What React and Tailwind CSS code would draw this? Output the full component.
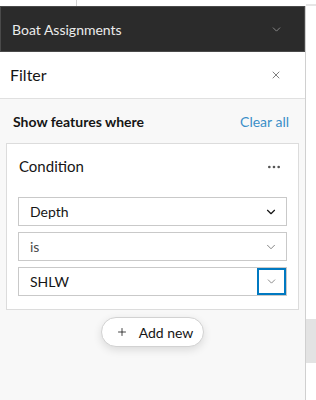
import React from 'react';
import { ChevronDown, X, Plus, MoreHorizontal } from 'lucide-react';

function SelectBox({ value, focused, muted }) {
  return (
    <div className="flex h-[29px] items-stretch border border-[#c9c9c9] bg-white">
      <div className={`flex flex-1 items-center pl-[11px] text-[14px] ${muted ? 'text-[#4a4a4a]' : 'text-[#151515]'}`}>{value}</div>
      {focused ? (
        <div className="flex w-[29px] items-center justify-center border-2 border-[#0079c1]">
          <ChevronDown size={13} strokeWidth={1.4} className="text-[#6a6a6a]" />
        </div>
      ) : (
        <div className="flex w-[30px] items-center justify-center">
          <ChevronDown size={14} strokeWidth={muted ? 1.4 : 2} className={muted ? 'text-[#6a6a6a]' : 'text-[#151515]'} />
        </div>
      )}
    </div>
  );
}

export default function App() {
  return (
    <div className="flex h-[400px] w-[316px] flex-col overflow-hidden bg-white font-['Lato','Noto_Sans',sans-serif]">
      {/* top strip */}
      <div className="flex h-[6px] shrink-0">
        <div className="w-[76px]" />
        <div className="w-px bg-[#d4d4d4]" />
        <div className="flex-1" />
        <div className="mt-[4px] h-[2px] w-[10px] bg-[#e6e6e6]" />
      </div>

      <div className="flex flex-1">
        <div className="flex w-[305px] flex-col">
          {/* panel header */}
          <div className="flex h-[46px] shrink-0 items-center justify-between border border-[#4a4a4a] bg-[#2b2b2b] pl-[11px] pr-[21px]">
            <span className="text-[14px] text-[#ececec]">Boat Assignments</span>
            <ChevronDown size={13} strokeWidth={1.5} className="text-[#9a9a9a]" />
          </div>

          {/* filter title */}
          <div className="flex h-[47px] shrink-0 items-center justify-between border-b border-[#e0e0e0] pl-[10px] pr-[23px]">
            <span className="text-[16px] text-[#151515]">Filter</span>
            <X size={12} strokeWidth={1.5} className="text-[#555]" />
          </div>

          {/* body */}
          <div className="flex flex-1 flex-col bg-[#f8f8f8] px-[6px]">
            <div className="flex h-[44px] items-center justify-between pl-[7px] pr-[10px]">
              <span className="text-[14px] font-bold text-[#151515]">Show features where</span>
              <span className="text-[14px] text-[#3b8fc8]">Clear all</span>
            </div>

            <div className="border border-[#dcdcdc] bg-white px-[11px] pb-[13px]">
              <div className="flex h-[45px] items-center justify-between pl-[1px] pr-[5px]">
                <span className="text-[15px] text-[#151515]">Condition</span>
                <MoreHorizontal size={16} strokeWidth={2} className="text-[#555]" />
              </div>
              <div className="mt-[8px] flex flex-col gap-[6px]">
                <SelectBox value="Depth" />
                <SelectBox value="is" muted />
                <SelectBox value="SHLW" focused />
              </div>
            </div>

            <div className="mt-[7px] flex justify-center">
              <button className="flex h-[30px] items-center gap-[11px] rounded-full border border-[#d2d2d2] bg-white pl-[14px] pr-[10px] text-[14px] text-[#151515] shadow-[0_3px_8px_rgba(0,0,0,0.12)]">
                <Plus size={12} strokeWidth={1.6} />
                <span>Add new</span>
              </button>
            </div>
          </div>
        </div>

        {/* right edge */}
        <div className="flex w-[11px] flex-col border-l border-[#d0d0d0] bg-white">
          <div className="h-[313px]" />
          <div className="h-[44px] bg-[#e3e3e3]" />
        </div>
      </div>
    </div>
  );
}
